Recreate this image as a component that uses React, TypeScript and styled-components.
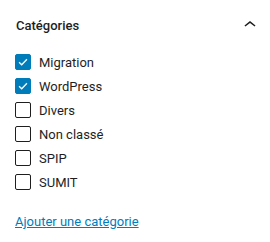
import styled, { createGlobalStyle } from "styled-components";

const GlobalStyle = createGlobalStyle`
  body {
    margin: 0;
    background: #fff;
    font-family: Roboto, "Liberation Sans", sans-serif;
    color: #1e1e1e;
  }
`;

const Panel = styled.div`
  width: 270px;
  padding: 0 8px 0 16px;
  box-sizing: border-box;
`;

const Header = styled.div`
  display: flex;
  align-items: center;
  justify-content: space-between;
  height: 50px;
`;

const Title = styled.h2`
  margin: 0;
  font-size: 13px;
  font-weight: 500;
  color: #1e1e1e;
`;

const Toggle = styled.span`
  display: flex;
  width: 24px;
  height: 24px;
  margin-top: -1px;
  margin-right: 0.5px;
`;

const List = styled.ul`
  list-style: none;
  margin: 0;
  padding: 0;
`;

const Row = styled.li`
  display: flex;
  align-items: center;
  gap: 8px;
  height: 24px;
  font-size: 13px;
`;

const Box = styled.span<{ $checked: boolean }>`
  display: flex;
  align-items: center;
  justify-content: center;
  width: 16px;
  height: 16px;
  box-sizing: border-box;
  margin-left: -1px;
  border-radius: 2px;
  border: 1px solid ${(p) => (p.$checked ? "#007cba" : "#1e1e1e")};
  background: ${(p) => (p.$checked ? "#007cba" : "#fff")};
`;

const AddLink = styled.a`
  display: inline-block;
  margin-top: 20px;
  margin-left: -1px;
  font-size: 13px;
  color: #007cba;
  text-decoration: underline;
  cursor: pointer;
`;

const categories = [
  { name: "Migration", checked: true },
  { name: "WordPress", checked: true },
  { name: "Divers", checked: false },
  { name: "Non classé", checked: false },
  { name: "SPIP", checked: false },
  { name: "SUMIT", checked: false },
];

function App() {
  return (
    <Panel>
      <GlobalStyle />
      <Header>
        <Title>Catégories</Title>
        <Toggle>
          <svg viewBox="0 0 24 24" width="24" height="24">
            <path d="M6.5 12.4L12 8l5.5 4.4-.9 1.2L12 10l-4.6 3.6-1-1.2z" fill="#1e1e1e" />
          </svg>
        </Toggle>
      </Header>
      <List>
        {categories.map((c) => (
          <Row key={c.name}>
            <Box $checked={c.checked}>
              {c.checked && (
                <svg viewBox="0 0 16 16" width="14" height="14">
                  <path d="M3.5 8.3l3 2.8 6-6.3" fill="none" stroke="#fff" strokeWidth="1.5" />
                </svg>
              )}
            </Box>
            {c.name}
          </Row>
        ))}
      </List>
      <AddLink>Ajouter une catégorie</AddLink>
    </Panel>
  );
}

export default App;
